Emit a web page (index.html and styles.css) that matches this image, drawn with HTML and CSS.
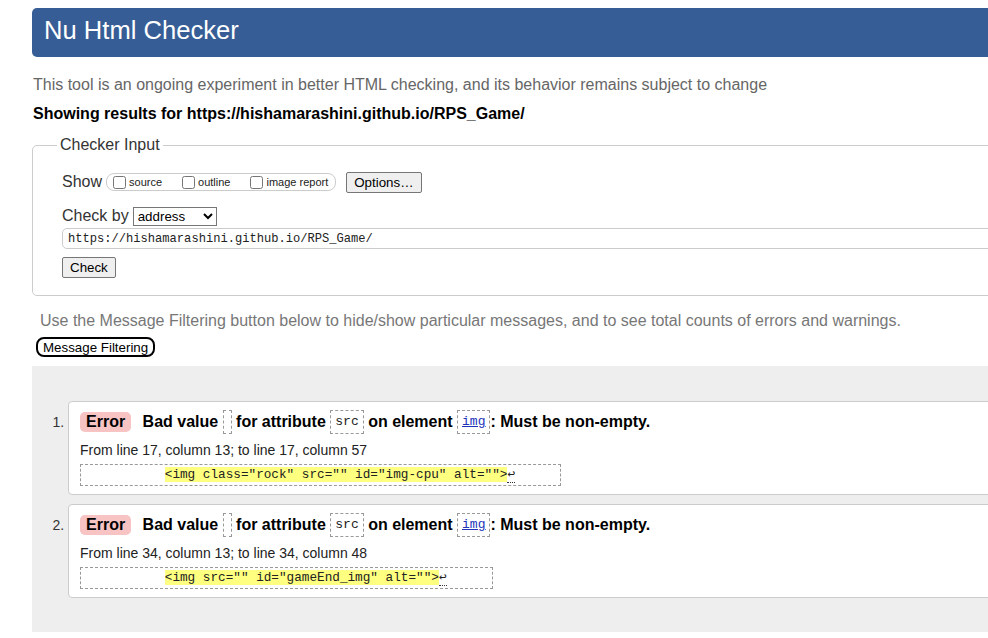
FILE: index.html
```html
<!DOCTYPE html>
<html lang="en">
<head>
<meta charset="utf-8">
<title>Showing results for https://hishamarashini.github.io/RPS_Game/ - Nu Html Checker</title>
<link rel="stylesheet" href="styles.css">
</head>
<body>
<div class="page">
  <h1 class="title">Nu Html Checker</h1>
  <p class="intro">This tool is an ongoing experiment in better HTML checking, and its behavior remains subject to change</p>
  <p class="showing">Showing results for https://hishamarashini.github.io/RPS_Game/</p>

  <fieldset class="checker">
    <legend class="legend">Checker Input</legend>
    <div class="fs-body">
      <div class="row row-show">
        <span class="row-label">Show</span>
        <span class="show-group">
          <label class="opt"><input type="checkbox" class="cb">source</label>
          <label class="opt"><input type="checkbox" class="cb">outline</label>
          <label class="opt"><input type="checkbox" class="cb">image report</label>
        </span>
        <button class="btn btn-options" type="button">Options…</button>
      </div>
      <div class="row row-by">
        <span class="row-label">Check by</span>
        <select class="by-select">
          <option>address</option>
          <option>file upload</option>
          <option>text input</option>
        </select>
      </div>
      <input class="url" type="url" value="https://hishamarashini.github.io/RPS_Game/">
      <button class="btn btn-check" type="button">Check</button>
    </div>
  </fieldset>

  <p class="filter-note">Use the Message Filtering button below to hide/show particular messages, and to see total counts of errors and warnings.</p>
  <button class="filter-btn" type="button">Message Filtering</button>

  <div class="results">
    <ol class="messages">
      <li class="msg">
        <p class="msg-head"><span class="badge">Error</span> Bad value <code class="cbox cbox-empty"></code> for attribute <code class="cbox">src</code> on element <a class="cbox" href="#"><code>img</code></a>: Must be non-empty.</p>
        <p class="loc">From line 17, column 13; to line 17, column 57</p>
        <div class="extract">           <b class="hl">&lt;img class="rock" src="" id="img-cpu" alt=""&gt;</b><span class="lf">↩</span></div>
      </li>
      <li class="msg">
        <p class="msg-head"><span class="badge">Error</span> Bad value <code class="cbox cbox-empty"></code> for attribute <code class="cbox">src</code> on element <a class="cbox" href="#"><code>img</code></a>: Must be non-empty.</p>
        <p class="loc">From line 34, column 13; to line 34, column 48</p>
        <div class="extract">           <b class="hl">&lt;img src="" id="gameEnd_img" alt=""&gt;</b><span class="lf">↩</span></div>
      </li>
    </ol>
  </div>
</div>
</body>
</html>
```

FILE: styles.css
```css
html, body {
  overflow: hidden;
}

body {
  margin: 0;
  background: #fff;
  color: #000;
  font-family: "Liberation Sans", Arial, sans-serif;
  font-size: 16px;
}

.page {
  width: 1100px;
  padding: 8px 0 0 32px;
}

.title {
  margin: 0;
  padding: 0 0 4px 12px;
  line-height: 45px;
  font-size: 25.6px;
  font-weight: normal;
  color: #fff;
  background: #365d95;
  border-radius: 5px 0 0 5px;
}

.intro {
  margin: 19px 0 0 1px;
  line-height: 18px;
  color: #666;
}

.showing {
  margin: 11px 0 0 1px;
  line-height: 18px;
  font-weight: bold;
}

.checker {
  margin: 13px 0 0;
  padding: 0 0 17px 0;
  border: 1px solid #ccc;
  border-radius: 5px;
  min-width: 0;
}

.legend {
  margin-left: 24px;
  padding: 0 3px;
  line-height: 18px;
  font-size: 16px;
  color: #333;
}

.fs-body {
  padding-left: 29px;
}

.row {
  display: flex;
  align-items: center;
}

.row-label {
  color: #333;
  font-size: 16px;
}

.row-show {
  margin-top: 17px;
  height: 22px;
}

.show-group {
  display: flex;
  align-items: center;
  box-sizing: border-box;
  height: 18px;
  margin-left: 4px;
  padding: 0 7px 0 6px;
  border: 1px solid #ccc;
  border-radius: 8px;
  font-size: 11px;
  color: #222;
}

.opt {
  display: flex;
  align-items: center;
}

.opt + .opt {
  margin-left: 20px;
}

.cb {
  width: 13px;
  height: 13px;
  margin: 0 3px 0 0;
}

.btn {
  box-sizing: border-box;
  height: 21px;
  font-family: "Liberation Sans", Arial, sans-serif;
  font-size: 13.33px;
  color: #000;
  background: #efefef;
  border: 1px solid #767676;
  border-radius: 2px;
}

.btn-options {
  margin-left: 10px;
  padding: 0 7px;
}

.row-by {
  margin-top: 13px;
  height: 20px;
}

.by-select {
  box-sizing: border-box;
  width: 84px;
  height: 19px;
  margin-left: 4px;
  font-family: "Liberation Sans", Arial, sans-serif;
  font-size: 13.33px;
  color: #000;
  background: #fff;
  border: 1px solid #767676;
  border-radius: 0;
}

.url {
  display: block;
  box-sizing: border-box;
  width: 1000px;
  height: 21px;
  margin-top: 2px;
  padding: 0 5px;
  border: 1px solid #ccc;
  border-radius: 5px;
  font-family: "Liberation Mono", "DejaVu Sans Mono", monospace;
  font-size: 12.1px;
  color: #222;
  background: #fff;
}

.btn-check {
  display: block;
  margin-top: 8px;
  padding: 0 7px;
}

.filter-note {
  margin: 16px 0 0 8px;
  line-height: 18px;
  color: #777;
}

.filter-btn {
  display: block;
  box-sizing: border-box;
  height: 20px;
  margin: 7px 0 0 4px;
  padding: 0 5px;
  font-family: "Liberation Sans", Arial, sans-serif;
  font-size: 13.33px;
  line-height: 15px;
  color: #000;
  background: #fff;
  border: 2px solid #000;
  border-radius: 8px;
}

.results {
  margin-top: 9px;
  padding: 35px 0 34px;
  background: #eee;
}

.messages {
  margin: 0;
  padding-left: 36px;
  list-style: decimal outside;
}

.msg {
  padding: 7px 12px 8px 11px;
  background: #fff;
  border: 1px solid #ccc;
  border-radius: 4px;
  font-size: 14px;
}

.msg::marker {
  color: #333;
}

.msg + .msg {
  margin-top: 9px;
}

.msg-head {
  margin: 0;
  font-size: 16px;
  font-weight: bold;
  line-height: 26px;
  white-space: nowrap;
}

.badge {
  display: inline-block;
  vertical-align: top;
  margin: 3px 7px 0 0;
  padding: 0 6px;
  line-height: 20px;
  background: #f7c3c3;
  border-radius: 5px;
}

.cbox {
  display: inline-block;
  vertical-align: top;
  box-sizing: border-box;
  height: 24px;
  margin-top: 1px;
  padding: 0 4px;
  line-height: 22px;
  border: 1px dashed #999;
  font-family: "Liberation Mono", "DejaVu Sans Mono", monospace;
  font-size: 13px;
  font-weight: normal;
  color: #222;
}

.cbox-empty {
  width: 9px;
  padding: 0;
}

a.cbox {
  color: #2233bb;
}

a.cbox code {
  font-family: inherit;
  text-decoration: underline;
}

.loc {
  margin: 7px 0 0;
  line-height: 16px;
  font-size: 14px;
  color: #222;
}

.extract {
  width: fit-content;
  margin-top: 6px;
  padding: 2px 45px 2px 0;
  border: 1px dashed #999;
  font-family: "Liberation Mono", "DejaVu Sans Mono", monospace;
  font-size: 12.7px;
  line-height: 16px;
  white-space: pre;
  color: #222;
}

.hl {
  font-weight: normal;
  background: #ffff80;
}

.lf {
  border-bottom: 1px dotted #333;
}
```
